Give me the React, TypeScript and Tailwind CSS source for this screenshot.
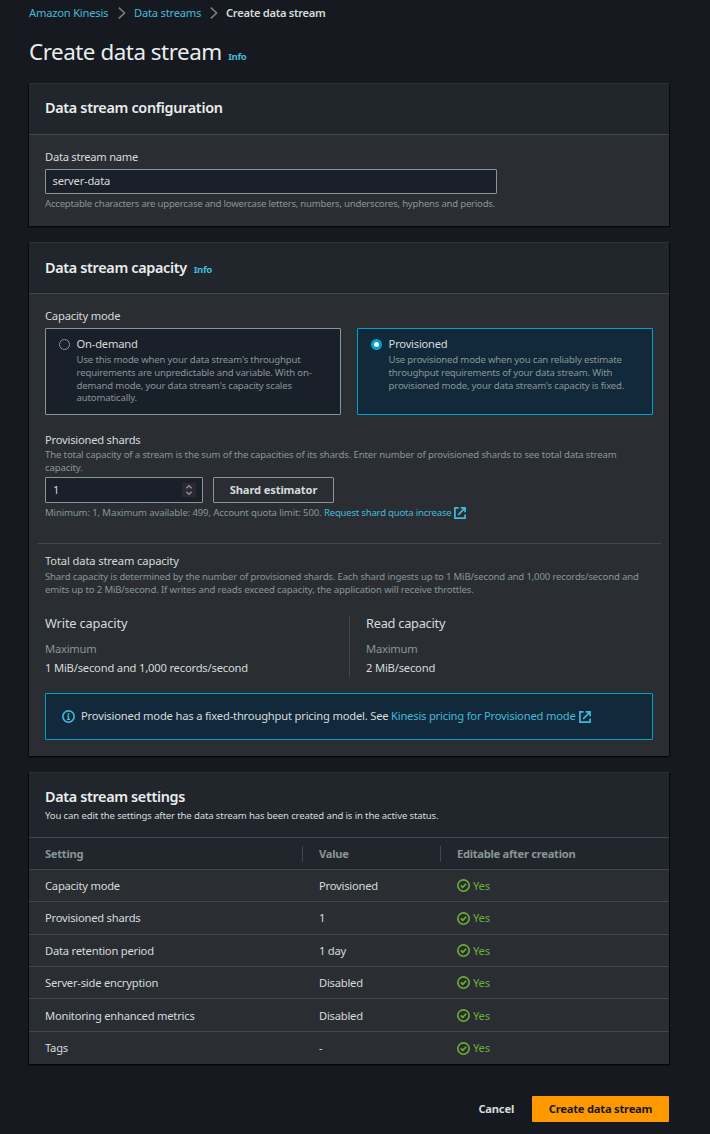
import type { ReactNode } from "react";

function Chevron() {
  return (
    <svg width="8" height="12" viewBox="0 0 8 12" fill="none" stroke="#7b8186" strokeWidth="1.5">
      <path d="M0.8 0.6 6.6 6 0.8 11.4" />
    </svg>
  );
}

function ExternalIcon() {
  return (
    <svg className="shrink-0" width="12" height="12" viewBox="0 0 12 12" fill="none" stroke="#44b9d6" strokeWidth="1.7">
      <path d="M4.6 0.9H0.9v10.2h10.2V7.4" />
      <path d="M6.7 0.9h4.4v4.4M11 1 4.2 7.8" />
    </svg>
  );
}

function InfoIcon() {
  return (
    <svg className="shrink-0" width="13" height="13" viewBox="0 0 16 16" fill="none" stroke="#44b9d6" strokeWidth="2">
      <circle cx="8" cy="8" r="7" />
      <path d="M8 11V7.5H6.2M6 11.5h4" strokeWidth="1.6" />
      <path d="M8 4v2" />
    </svg>
  );
}

function CheckIcon() {
  return (
    <svg className="shrink-0" width="13" height="13" viewBox="0 0 16 16" fill="none" stroke="#6aaf35" strokeWidth="2">
      <circle cx="8" cy="8" r="7" />
      <path d="m4.7 7.9 2.4 2.3 4.2-4.3" />
    </svg>
  );
}

function Panel({ className, children }: { className: string; children: ReactNode }) {
  return (
    <section className={`w-[640px] border-t border-[#2e3134] bg-[#2a2e33] shadow-[0_1px_1px_0_#07090c,1px_1px_1px_0_#0b0d11,-1px_1px_1px_0_#0b0d11] ${className}`}>
      {children}
    </section>
  );
}

function InfoLink() {
  return <a className="text-[9.6px] font-bold tracking-[-0.04em] text-[#44b9d6]">Info</a>;
}

const rows = [
  { name: "Capacity mode", value: "Provisioned", size: "h-8" },
  { name: "Provisioned shards", value: "1", size: "h-[33px]" },
  { name: "Data retention period", value: "1 day", size: "h-8" },
  { name: "Server-side encryption", value: "Disabled", size: "h-8" },
  { name: "Monitoring enhanced metrics", value: "Disabled", size: "h-[33px] pt-px" },
  { name: "Tags", value: "-", size: "h-8" },
];

const cols = "grid grid-cols-[274px_138px_1fr] items-center pl-4";

export default function App() {
  return (
    <main className="flex h-[1134px] w-[710px] flex-col overflow-hidden bg-[#16191f] pl-[29px] font-['Noto_Sans','Open_Sans',sans-serif] text-[11.2px] leading-4 tracking-[-0.02em] whitespace-nowrap text-[#d5dbdb]">
      <nav className="flex h-[26px] shrink-0 items-center">
        <a className="w-[89px] text-[#44b9d6]">Amazon Kinesis</a>
        <Chevron />
        <a className="ml-2 w-[76px] text-[#44b9d6]">Data streams</a>
        <Chevron />
        <span className="ml-2 font-semibold tracking-[-0.027em]">Create data stream</span>
      </nav>

      <div className="flex h-[57px] shrink-0 items-baseline gap-[6.5px] pt-[10px]">
        <h1 className="text-[22.4px] leading-8 tracking-[-0.021em] text-[#eaeded]">Create data stream</h1>
        <InfoLink />
      </div>

      <Panel className="h-[143px] shrink-0">
        <header className="flex h-[51px] items-center border-b border-[#414750] bg-[#21252c] px-4 pb-[2px]">
          <h2 className="text-[14.4px] leading-5 font-semibold tracking-[-0.022em] text-[#eaeded]">Data stream configuration</h2>
        </header>
        <div className="flex flex-col px-4 pt-[14px]">
          <label className="tracking-[-0.024em]">Data stream name</label>
          <div className="mt-1 flex h-[25px] w-[452px] items-center rounded-[1px] border border-[#879596] bg-[#1a2029] px-[6.5px] pb-px">server-data</div>
          <p className="mt-[3px] text-[9.6px] leading-[13px] tracking-[-0.0235em] text-[#879596]">
            Acceptable characters are uppercase and lowercase letters, numbers, underscores, hyphens and periods.
          </p>
        </div>
      </Panel>

      <Panel className="mt-4 h-[514px] shrink-0">
        <header className="flex h-[51px] items-center border-b border-[#414750] bg-[#21252c] px-4">
          <div className="flex items-baseline gap-[7px]">
            <h2 className="text-[14.4px] leading-5 font-semibold tracking-[-0.023em] text-[#eaeded]">Data stream capacity</h2>
            <InfoLink />
          </div>
        </header>
        <div className="flex flex-col px-4 pt-[14px]">
          <h3 className="tracking-[-0.0175em]">Capacity mode</h3>
          <div className="mt-1 flex gap-4">
            <div className="flex h-[87px] w-[296px] gap-[6.6px] rounded-[1px] border border-[#879596] bg-[#1a2029] pt-[7px] pl-[13px]">
              <div className="mt-[3px] size-[11px] shrink-0 rounded-full border border-[#879596]" />
              <div>
                <div>On-demand</div>
                <p className="mt-[2px] text-[9.6px] leading-[12.8px] tracking-[-0.0185em] text-[#879596]">
                  Use this mode when your data stream's throughput<br />
                  requirements are unpredictable and variable. With on-<br />
                  demand mode, your data stream's capacity scales<br />
                  automatically.
                </p>
              </div>
            </div>
            <div className="flex h-[87px] w-[296px] gap-[6.6px] rounded-[1px] border border-[#00a1c9] bg-[#12293b] pt-[7px] pl-[13px]">
              <div className="mt-[3px] flex size-[11px] shrink-0 items-center justify-center rounded-full bg-[#00a1c9]">
                <div className="size-[5px] rounded-full bg-white" />
              </div>
              <div>
                <div>Provisioned</div>
                <p className="mt-[2px] text-[9.6px] leading-[12.8px] tracking-[-0.0195em] text-[#879596]">
                  Use provisioned mode when you can reliably estimate<br />
                  throughput requirements of your data stream. With<br />
                  provisioned mode, your data stream's capacity is fixed.
                </p>
              </div>
            </div>
          </div>

          <h3 className="mt-[17px]">Provisioned shards</h3>
          <p className="text-[9.6px] leading-[13px] tracking-[-0.0152em] text-[#879596]">
            The total capacity of a stream is the sum of the capacities of its shards. Enter number of provisioned shards to see total data stream<br />
            capacity.
          </p>
          <div className="mt-[3px] flex gap-[10px]">
            <div className="flex h-[26px] w-[158px] items-center justify-between rounded-[1px] border border-[#879596] bg-[#1a2029] pr-[6px] pl-[7px]">
              <span>1</span>
              <span className="flex h-[14px] w-[14px] items-center justify-center bg-[#2b2a33]">
                <svg width="8" height="12" viewBox="0 0 8 12" fill="none" stroke="#8f8e97" strokeWidth="1.3">
                  <path d="M1.4 4.2 4 1.7l2.6 2.5M1.4 7.8 4 10.3l2.6-2.5" />
                </svg>
              </span>
            </div>
            <button className="h-[26px] w-[121px] rounded-[1px] border border-[#879596] font-bold tracking-[-0.014em]">Shard estimator</button>
          </div>
          <div className="mt-[3px] flex h-[13px] items-center text-[9.6px] leading-[13px] text-[#879596]">
            <span className="w-[279px] tracking-[-0.015em]">Minimum: 1, Maximum available: 499, Account quota limit: 500.</span>
            <a className="w-[130px] tracking-[-0.0234em] text-[#44b9d6]">Request shard quota increase</a>
            <ExternalIcon />
          </div>

          <hr className="-mx-2 mt-6 border-[#414750]" />

          <h3 className="mt-[9px] tracking-[-0.012em]">Total data stream capacity</h3>
          <p className="mt-px text-[9.6px] leading-[13px] tracking-[-0.018em] text-[#879596]">
            Shard capacity is determined by the number of provisioned shards. Each shard ingests up to 1 MiB/second and 1,000 records/second and<br />
            <span className="tracking-[-0.0155em]">emits up to 2 MiB/second. If writes and reads exceed capacity, the application will receive throttles.</span>
          </p>

          <div className="mt-[19px] flex h-[62px]">
            <div className="w-[304px]">
              <h4 className="text-[12.8px] leading-[17px] tracking-[-0.012em]">Write capacity</h4>
              <div className="mt-[9px] text-[#879596]">Maximum</div>
              <div className="mt-[3px] tracking-[-0.017em]">1 MiB/second and 1,000 records/second</div>
            </div>
            <div className="border-l border-[#414750] pl-4">
              <h4 className="text-[12.8px] leading-[17px] tracking-[-0.02em]">Read capacity</h4>
              <div className="mt-[9px] text-[#879596]">Maximum</div>
              <div className="mt-[3px] tracking-[-0.017em]">2 MiB/second</div>
            </div>
          </div>

          <div className="mt-4 flex h-[47px] items-center rounded-[1px] border border-[#00a1c9] bg-[#12293b] pl-4">
            <InfoIcon />
            <span className="ml-[6px] w-[310px] pb-[2px] tracking-[-0.0168em]">Provisioned mode has a fixed-throughput pricing model. See</span>
            <a className="w-[188px] pb-[2px] tracking-[-0.018em] text-[#44b9d6]">Kinesis pricing for Provisioned mode</a>
            <ExternalIcon />
          </div>
        </div>
      </Panel>

      <Panel className="mt-4 h-[292px] shrink-0">
        <header className="h-[65px] border-b border-[#414750] bg-[#21252c] px-4 pt-[14px]">
          <h2 className="text-[14.4px] leading-5 font-semibold tracking-[-0.024em] text-[#eaeded]">Data stream settings</h2>
          <p className="mt-[2px] text-[9.6px] leading-[13px] tracking-[-0.0153em]">
            You can edit the settings after the data stream has been created and is in the active status.
          </p>
        </header>
        <div className={`${cols} h-8 border-b border-[#414750] bg-[#21252c] font-bold tracking-[-0.026em] text-[#879596]`}>
          <span className="mr-4 border-r border-[#414750]">Setting</span>
          <span className="mr-4 border-r border-[#414750]">Value</span>
          <span>Editable after creation</span>
        </div>
        {rows.map((r) => (
          <div key={r.name} className={`${cols} ${r.size} border-b border-[#414750] last:border-b-0`}>
            <span className="tracking-[-0.02em]">{r.name}</span>
            <span>{r.value}</span>
            <span className="flex items-center gap-[3px] text-[#6aaf35]">
              <CheckIcon />
              Yes
            </span>
          </div>
        ))}
      </Panel>

      <footer className="mt-8 flex h-[26px] w-[640px] shrink-0 items-center justify-end gap-[18px] font-bold">
        <button>Cancel</button>
        <button className="h-[26px] w-[137px] rounded-[1px] bg-[#ff9900] tracking-[-0.02em] text-[#16191f]">Create data stream</button>
      </footer>
    </main>
  );
}
